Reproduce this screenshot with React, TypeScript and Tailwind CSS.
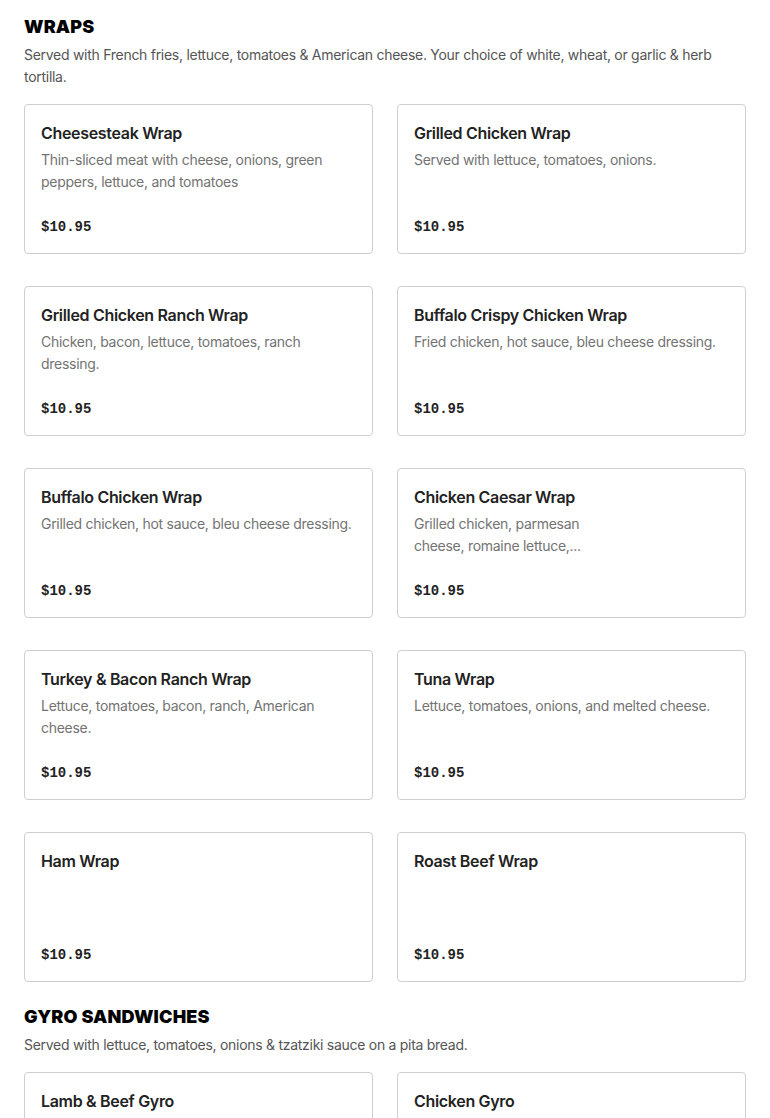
type Item = {
  name: string;
  desc?: string;
  price: string;
  narrow?: boolean;
};

type Section = {
  title: string;
  note: string;
  items: Item[];
};

const sections: Section[] = [
  {
    title: "WRAPS",
    note: "Served with French fries, lettuce, tomatoes & American cheese. Your choice of white, wheat, or garlic & herb tortilla.",
    items: [
      { name: "Cheesesteak Wrap", desc: "Thin-sliced meat with cheese, onions, green peppers, lettuce, and tomatoes", price: "$10.95" },
      { name: "Grilled Chicken Wrap", desc: "Served with lettuce, tomatoes, onions.", price: "$10.95" },
      { name: "Grilled Chicken Ranch Wrap", desc: "Chicken, bacon, lettuce, tomatoes, ranch dressing.", price: "$10.95" },
      { name: "Buffalo Crispy Chicken Wrap", desc: "Fried chicken, hot sauce, bleu cheese dressing.", price: "$10.95" },
      { name: "Buffalo Chicken Wrap", desc: "Grilled chicken, hot sauce, bleu cheese dressing.", price: "$10.95" },
      { name: "Chicken Caesar Wrap", desc: "Grilled chicken, parmesan cheese, romaine lettuce,...", price: "$10.95", narrow: true },
      { name: "Turkey & Bacon Ranch Wrap", desc: "Lettuce, tomatoes, bacon, ranch, American cheese.", price: "$10.95" },
      { name: "Tuna Wrap", desc: "Lettuce, tomatoes, onions, and melted cheese.", price: "$10.95" },
      { name: "Ham Wrap", price: "$10.95" },
      { name: "Roast Beef Wrap", price: "$10.95" },
    ],
  },
  {
    title: "GYRO SANDWICHES",
    note: "Served with lettuce, tomatoes, onions & tzatziki sauce on a pita bread.",
    items: [
      { name: "Lamb & Beef Gyro", desc: "", price: "$10.95" },
      { name: "Chicken Gyro", desc: "", price: "$10.95" },
    ],
  },
];

function MenuCard({ item }: { item: Item }) {
  return (
    <div className="flex h-[150px] flex-col rounded-[4px] border border-[#cfcfcf] bg-white px-4 pt-4 pb-4">
      <h3 className="text-[16px] leading-6 font-semibold tracking-[-0.02em] text-[#222]">{item.name}</h3>
      {item.desc && (
        <p
          className={
            "mt-1 line-clamp-2 text-[14px] leading-[22px] tracking-[-0.02em] text-[#737373] " +
            (item.narrow ? "max-w-[175px]" : "")
          }
        >
          {item.desc}
        </p>
      )}
      <div className="mt-auto font-['Liberation_Mono',monospace] text-[14px] leading-5 font-bold text-[#222]">
        {item.price}
      </div>
    </div>
  );
}

export default function App() {
  return (
    <div className="min-h-screen bg-white px-6 pt-[14px] font-['Inter',sans-serif]">
      {sections.map((section, i) => (
        <section key={section.title} className={i > 0 ? "mt-[22px]" : ""}>
          <h2 className="text-[18px] leading-[26px] font-black tracking-[0.01em] text-black">
            {section.title}
          </h2>
          <p className="mt-1 text-[14px] leading-[22px] tracking-[-0.02em] text-[#555]">{section.note}</p>
          <div className="mt-4 grid grid-cols-2 gap-x-6 gap-y-8">
            {section.items.map((item) => (
              <MenuCard key={item.name} item={item} />
            ))}
          </div>
        </section>
      ))}
    </div>
  );
}
